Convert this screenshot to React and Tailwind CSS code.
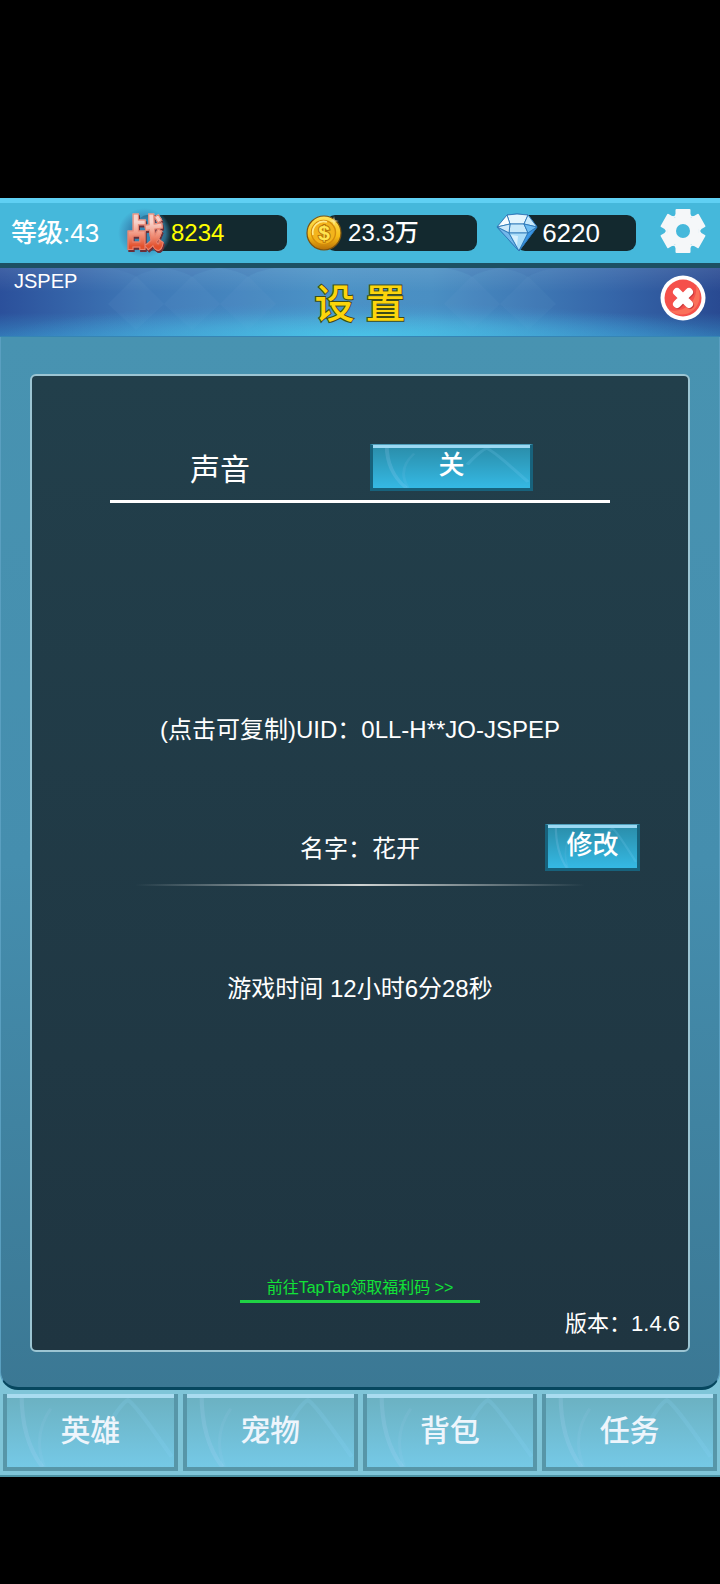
import React from 'react';

const tabs = ['英雄', '宠物', '背包', '任务'];

const CoinIcon = () => (
  <svg viewBox="0 0 36 36" className="w-9 h-9" aria-hidden="true">
    <defs>
      <linearGradient id="coinRim" x1="0" y1="0" x2="0" y2="1">
        <stop offset="0" stopColor="#ffe65a" />
        <stop offset="0.6" stopColor="#f7bc16" />
        <stop offset="1" stopColor="#b86f06" />
      </linearGradient>
    </defs>
    <circle cx="18" cy="18" r="17" fill="url(#coinRim)" stroke="#7d5410" strokeWidth="1.2" />
    <circle cx="17.5" cy="17.5" r="12" fill="#f3b41c" stroke="#d48c0c" strokeWidth="1.4" />
    <path d="M7 20a11 11 0 0 1 14-13" fill="none" stroke="#ffe98a" strokeWidth="1.6" />
    <path d="M28 1l1 4 4 1-4 1-1 4-1-4-4-1 4-1z" fill="#fff6c0" opacity="0.5" />
    <text x="18" y="25" textAnchor="middle" fontSize="21" fontWeight="700" fill="#ffe450" stroke="#b87408" strokeWidth="2" paintOrder="stroke" fontFamily="Liberation Sans, sans-serif">$</text>
  </svg>
);

const DiamondIcon = () => (
  <svg viewBox="0 0 42 40" className="w-[42px] h-10" aria-hidden="true">
    <g stroke="#2d78b8" strokeWidth="0.9" strokeLinejoin="round">
      <path d="M11 2L21 1 32 2 41 14 23 38 1 14z" fill="#8fd0f6" />
      <path d="M11 2L21 1 32 2 28 11 14 11z" fill="#e4f5fd" />
      <path d="M11 2L14 11 1 14z" fill="#f8fdff" />
      <path d="M32 2L41 14 28 11z" fill="#c9eafc" />
      <path d="M14 11h14l4 9-19 0z" fill="#c6e8fa" />
      <path d="M14 11L13 20 1 14z" fill="#cfeafa" />
      <path d="M28 11L41 14 32 20z" fill="#6dbcf2" />
      <path d="M1 14L13 20 23 38z" fill="#72b7ea" />
      <path d="M13 20L32 20 23 38z" fill="#a9dcf8" />
      <path d="M32 20L41 14 23 38z" fill="#3a96e6" />
    </g>
    <path d="M15 22l7 1-1 10z" fill="#e9f8ff" opacity="0.7" />
  </svg>
);

const GearIcon = () => (
  <svg viewBox="-23 -23 46 46" className="w-[46px] h-[46px]" fill="#f5f7f9" aria-hidden="true">
    <path fillRule="evenodd" d="M0-16a16 16 0 1 1 0 32a16 16 0 1 1 0-32zM0-7a7 7 0 1 0 0 14a7 7 0 1 0 0-14z" />
    {[0, 60, 120, 180, 240, 300].map((a) => (
      <path key={a} d="M-9-14L-7.500-17V-21Q-7.500-22-6.500-22H6.500Q7.500-22 7.500-21V-17L9-14z" transform={`rotate(${a})`} />
    ))}
  </svg>
);

const CloseIcon = () => (
  <svg viewBox="0 0 46 46" className="w-[46px] h-[46px]" aria-hidden="true">
    <circle cx="23" cy="23" r="22.500" fill="#ffffff" />
    <circle cx="23" cy="23" r="18.500" fill="#f5504b" />
    <path d="M9 35A18.500 18.500 0 0 0 36 10a22 22 0 0 1-27 25z" fill="#fa705a" />
    <path d="M18 18L30 30M30 18L18 30" stroke="#c93c3c" strokeWidth="8" strokeLinecap="round" />
    <path d="M17 17L29 29M29 17L17 29" stroke="#ffffff" strokeWidth="8" strokeLinecap="round" />
  </svg>
);

// light streaks on the glass buttons
const Streaks = () => (
  <svg viewBox="0 0 160 70" preserveAspectRatio="none" className="absolute inset-0 w-full h-full" fill="none" aria-hidden="true">
    <path d="M14 0Q14 44 34 70" stroke="#b9dcff" strokeOpacity="0.16" strokeWidth="4" />
    <path d="M42 14Q24 40 36 70" stroke="#b9dcff" strokeOpacity="0.08" strokeWidth="3" />
    <path d="M96 32Q110 8 116 6Q122 8 158 60" stroke="#8fdcff" strokeOpacity="0.16" strokeWidth="4" />
  </svg>
);

const GlassButton = ({ children, className }) => (
  <button className={`relative h-[47px] border-[3px] border-t border-[#17627c] border-t-[#4f9fbb] bg-gradient-to-b from-[#2a8ca8] to-[#35b9e4] text-[26px] leading-8 font-medium text-white ${className}`}>
    <Streaks />
    <span className="absolute inset-x-0 top-0 h-[3px] bg-[#9bd9f3]"></span>
    <span className="relative block pb-1">{children}</span>
  </button>
);

const Stat = ({ icon, children, className }) => (
  <div className="relative flex items-center h-9">
    <div className="absolute inset-y-0 left-5 right-0 rounded-[9px] bg-[#13292f]"></div>
    <div className="relative flex items-center justify-center shrink-0">{icon}</div>
    <span className={`relative ${className}`}>{children}</span>
  </div>
);

const Banner = () => (
  <svg viewBox="0 0 720 69" preserveAspectRatio="none" className="absolute inset-0 w-full h-full" aria-hidden="true">
    <defs>
      <linearGradient id="bannerBase">
        <stop offset="0" stopColor="#2b509b" />
        <stop offset="0.2" stopColor="#3f79b7" />
        <stop offset="0.45" stopColor="#4b92c6" />
        <stop offset="0.6" stopColor="#4a8fc3" />
        <stop offset="0.85" stopColor="#3566a9" />
        <stop offset="1" stopColor="#294a92" />
      </linearGradient>
      <radialGradient id="bannerGlow" cx="0.5" cy="1" r="0.5">
        <stop offset="0" stopColor="#52d0ee" stopOpacity="0.9" />
        <stop offset="0.5" stopColor="#4cc0e6" stopOpacity="0.45" />
        <stop offset="1" stopColor="#3a9ad8" stopOpacity="0" />
      </radialGradient>
      <linearGradient id="bannerTop" x1="0" y1="0" x2="0" y2="1">
        <stop offset="0" stopColor="#ffffff" stopOpacity="0.1" />
        <stop offset="0.35" stopColor="#ffffff" stopOpacity="0" />
        <stop offset="0.65" stopColor="#3fb8e4" stopOpacity="0" />
        <stop offset="1" stopColor="#3fb8e4" stopOpacity="0.4" />
      </linearGradient>
    </defs>
    <rect width="720" height="69" fill="url(#bannerBase)" />
    <g fill="#6f9fd2" opacity="0.1">
      {[136, 192, 248, 472, 528].map((x) => (
        <path key={x} d={`M${x} 8l28 28-28 26-28-26z`} />
      ))}
    </g>
    <g fill="#2f61a6" opacity="0.2">
      {[136, 192, 248, 472, 528].map((x) => (
        <path key={x} d={`M${x - 26} 0h52q-20 4-26 9q-6-5-26-9z`} />
      ))}
    </g>
    <rect width="720" height="69" fill="url(#bannerGlow)" />
    <rect width="720" height="69" fill="url(#bannerTop)" />
  </svg>
);

const App = () => {
  return (
    <div className="min-h-screen bg-black pt-[198px] pb-[107px] font-['Liberation_Sans','Noto_Sans_CJK_SC',sans-serif] text-white">
      <div className="bg-[#7fc5d8] border-b-2 border-[#4e94a5]">
        {/* Resource bar */}
        <header className="grid grid-cols-[88px_168fr_170fr_139fr_51px] items-center gap-[19px] h-[65px] pl-[11px] pr-3.5 bg-[#45b8db] border-t-[5px] border-[#5fd0f3]">
          <span className="text-[26px] leading-8 font-medium whitespace-nowrap">等级:43</span>
          <Stat
            className="text-2xl font-medium text-[#ffff00]"
            icon={
              <span className="flex items-center justify-center w-[53px] h-[50px] rounded-full bg-[radial-gradient(closest-side,#3486b3_50%,#3d95c099_80%,transparent)]">
                <span className="text-[38px] leading-[44px] font-black text-transparent bg-clip-text bg-gradient-to-b from-[#f6d3cc] from-25% to-[#e2502c] to-80% [-webkit-text-stroke:1px_#e98470] drop-shadow-[1px_2px_0_#6b2f38]">战</span>
              </span>
            }
          >
            8234
          </Stat>
          <Stat className="pl-1.5 text-2xl font-medium" icon={<CoinIcon />}>23.3万</Stat>
          <Stat className="pl-1 text-[26px] font-medium" icon={<DiamondIcon />}>6220</Stat>
          <button aria-label="设置" className="justify-self-end pb-1">
            <GearIcon />
          </button>
        </header>

        {/* Title banner */}
        <div className="relative h-[74px] border-t-[5px] border-[#1d5063]">
          <Banner />
          <div className="relative grid grid-cols-[1fr_auto_1fr] h-full px-3.5 border-b border-[#3585b5]">
            <span className="text-xl leading-[26px]">JSPEP</span>
            <h1 className="self-center pt-1 text-[40px] leading-[48px] font-medium text-[#fcd50c] [-webkit-text-stroke:2px_#3d4c18] [paint-order:stroke_fill]">设 置</h1>
            <button aria-label="关闭" className="justify-self-end self-center pb-2">
              <CloseIcon />
            </button>
          </div>
        </div>

        {/* Settings panel */}
        <main className="px-[29px] pt-[37px] pb-[35px] bg-gradient-to-b from-[#4893b1] via-[#458eae] to-[#3b7894] border-x border-b-[3px] border-x-[#5a9fc0] border-b-[#06475f] rounded-b-[18px]">
          <div className="flex flex-col items-center border-2 border-[#9cc5d3] rounded-md bg-gradient-to-b from-[#223f4b] to-[#1f3541]">
            <div className="flex items-center w-[500px] max-w-full mt-[68px] pb-[9px] border-b-[3px] border-white">
              <span className="w-[260px] pl-[80px] pt-1 text-[30px] leading-9">声音</span>
              <GlassButton className="w-[163px]">关</GlassButton>
            </div>

            <button className="mt-[209px] text-2xl leading-9">(点击可复制)UID：0LL-H**JO-JSPEP</button>

            <div className="grid grid-cols-[1fr_auto_1fr] items-center w-full mt-[76px] px-12">
              <span className="col-start-2 pt-0.5 text-2xl leading-9">名字：花开</span>
              <GlassButton className="w-[95px] justify-self-end">修改</GlassButton>
            </div>
            <div className="w-[500px] max-w-full h-0.5 mt-[13px] bg-gradient-to-r from-transparent from-5% via-[#cfd3d2] to-transparent to-95%"></div>

            <p className="mt-[85px] text-2xl leading-9">游戏时间 12小时6分28秒</p>

            <a href="#" className="w-60 mt-[268px] border-b-[3px] border-[#1fd244] text-center text-base leading-[25px] text-[#12e237]">前往TapTap领取福利码 &gt;&gt;</a>
            <p className="self-end mt-[5px] pr-2 pb-2.5 text-[22px] leading-8">版本：1.4.6</p>
          </div>
        </main>

        {/* Bottom tabs */}
        <nav className="grid grid-cols-4 gap-[5px] px-[3px] py-1">
          {tabs.map((tab) => (
            <button key={tab} className="relative h-[77px] border-4 border-t-0 border-[#5796a8] bg-gradient-to-b from-[#6bb0c0] to-[#75c9e6] text-[30px] leading-9 font-medium text-[#eef5fc]">
              <Streaks />
              <span className="absolute inset-x-0 top-0 h-1 bg-[#a9dcf0]"></span>
              <span className="relative">{tab}</span>
            </button>
          ))}
        </nav>
      </div>
    </div>
  );
};

export default App;
